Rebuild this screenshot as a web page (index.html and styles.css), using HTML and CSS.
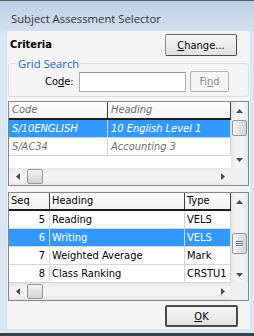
FILE: index.html
```html
<!DOCTYPE html>
<html lang="en">
<head>
    <meta charset="UTF-8">
    <title>Subject Assessment Selector</title>
    <link rel="stylesheet" href="styles.css">
</head>
<body>
<div class="window">
    <div class="titlebar">Subject Assessment Selector</div>
    <div class="client">
        <div class="criteria-row">
            <span class="criteria">Criteria</span>
            <button class="btn btn-change"><u>C</u>hange...</button>
        </div>

        <fieldset class="group">
            <legend>Grid Search</legend>
            <div class="search-row">
                <label for="codeInput">Co<u>d</u>e:</label>
                <input type="text" id="codeInput">
                <button class="btn btn-find" disabled>Fi<u>n</u>d</button>
            </div>
        </fieldset>

        <div class="grid grid-upper">
            <div class="cells">
                <div class="row head">
                    <div class="cell">Code</div>
                    <div class="cell">Heading</div>
                </div>
                <div class="row selected">
                    <div class="cell">S/10ENGLISH</div>
                    <div class="cell">10 English Level 1</div>
                </div>
                <div class="row">
                    <div class="cell">S/AC34</div>
                    <div class="cell">Accounting 3</div>
                </div>
            </div>
            <div class="vscroll">
                <div class="arrow"><svg width="7" height="4"><path d="M0 4L3.5 0L7 4Z"/></svg></div>
                <div class="track">
                    <div class="thumb thumb-upper"></div>
                </div>
                <div class="arrow"><svg width="7" height="4"><path d="M0 0L3.5 4L7 0Z"/></svg></div>
            </div>
            <div class="hscroll">
                <div class="arrow"><svg width="4" height="7"><path d="M4 0L0 3.5L4 7Z"/></svg></div>
                <div class="track">
                    <div class="thumb"></div>
                </div>
                <div class="arrow"><svg width="4" height="7"><path d="M0 0L4 3.5L0 7Z"/></svg></div>
            </div>
            <div class="corner"></div>
        </div>

        <div class="grid grid-lower">
            <div class="cells">
                <div class="row head">
                    <div class="cell">Seq</div>
                    <div class="cell">Heading</div>
                    <div class="cell">Type</div>
                </div>
                <div class="row">
                    <div class="cell num">5</div>
                    <div class="cell">Reading</div>
                    <div class="cell">VELS</div>
                </div>
                <div class="row selected">
                    <div class="cell num">6</div>
                    <div class="cell">Writing</div>
                    <div class="cell">VELS</div>
                </div>
                <div class="row">
                    <div class="cell num">7</div>
                    <div class="cell">Weighted Average</div>
                    <div class="cell">Mark</div>
                </div>
                <div class="row">
                    <div class="cell num">8</div>
                    <div class="cell">Class Ranking</div>
                    <div class="cell">CRSTU1</div>
                </div>
            </div>
            <div class="vscroll">
                <div class="arrow"><svg width="7" height="4"><path d="M0 4L3.5 0L7 4Z"/></svg></div>
                <div class="track">
                    <div class="thumb thumb-lower"><span></span><span></span><span></span></div>
                </div>
                <div class="arrow"><svg width="7" height="4"><path d="M0 0L3.5 4L7 0Z"/></svg></div>
            </div>
            <div class="hscroll">
                <div class="arrow"><svg width="4" height="7"><path d="M4 0L0 3.5L4 7Z"/></svg></div>
                <div class="track">
                    <div class="thumb"></div>
                </div>
                <div class="arrow"><svg width="4" height="7"><path d="M0 0L4 3.5L0 7Z"/></svg></div>
            </div>
            <div class="corner"></div>
        </div>

        <div class="footer">
            <button class="btn btn-ok"><u>O</u>K</button>
        </div>
    </div>
    <div class="taskbar"></div>
</div>
</body>
</html>
```

FILE: styles.css
```css
html, body {
    margin: 0;
    overflow: hidden;
}

body {
    font-family: "DejaVu Sans Condensed", "DejaVu Sans", sans-serif;
    font-size: 11px;
    color: #000;
    background: #d8e6f5;
}

.window {
    width: 254px;
    height: 336px;
    display: flex;
    flex-direction: column;
    box-sizing: border-box;
    border-top: 1px solid #4f5a68;
    background: linear-gradient(#bfcfe2, #cddcee 24px, #d8e6f5 34px, #d8e6f5);
}

.titlebar {
    height: 30px;
    padding-left: 11px;
    line-height: 36px;
    font-family: "Open Sans", sans-serif;
    font-size: 11.3px;
    color: #333;
    box-sizing: border-box;
}

.client {
    margin: 0 4px 0 7px;
    height: 298px;
    background: #f4f4f4;
    display: flex;
    flex-direction: column;
}

.taskbar {
    margin-top: auto;
    height: 3px;
    background: #3b4048;
}

/* buttons */
.btn {
    font: inherit;
    color: #000;
    padding: 0;
    background: linear-gradient(#f6f6f6, #ececec 50%, #e0e0e0);
    border: 1px solid #707070;
    border-radius: 2px;
    box-sizing: border-box;
}

.criteria-row {
    display: flex;
    align-items: center;
    justify-content: space-between;
    height: 22px;
    margin: 3px 13px 0 3px;
}

.criteria {
    font-weight: bold;
    margin-top: -2px;
}

.btn-change {
    width: 72px;
    height: 22px;
    border-color: #6a6a6a #4a4a4a #4a4a4a #8a8a8a;
}

/* group box */
.group {
    margin: 0 1px;
    height: 41px;
    padding: 0;
    border: 1px solid #d5dfe5;
    border-radius: 3px;
    box-sizing: border-box;
}

.group legend {
    color: #1a5fd6;
    padding: 0 2px;
    margin-left: 7px;
    font-family: "Open Sans", sans-serif;
    font-size: 11.3px;
    line-height: 15px;
}

.search-row {
    display: flex;
    align-items: center;
    padding-left: 36px;
    margin-top: 0;
}

.search-row label {
    width: 34px;
}

.search-row input {
    width: 107px;
    height: 20px;
    box-sizing: border-box;
    border: 1px solid #abadb3;
    border-top-color: #8c8f96;
    background: #fff;
    margin: 0;
}

.btn-find {
    width: 39px;
    height: 21px;
    margin-left: 4px;
    color: #8d8d8d;
    border-color: #adb2b5;
    background: #f4f4f4;
}

/* grids */
.grid {
    display: grid;
    grid-template-columns: 1fr 17px;
    grid-template-rows: 1fr 17px;
    margin: 4px 1px 0;
    border: 1px solid #828790;
    background: #fff;
}

.grid-upper {
    height: 85px;
    box-sizing: border-box;
}

.grid-lower {
    height: 109px;
    box-sizing: border-box;
    margin-top: 6px;
}

.cells {
    overflow: hidden;
}

.row {
    display: grid;
    height: 18px;
    box-sizing: border-box;
    border-bottom: 1px solid #d4d4d4;
}

.grid-upper .row {
    grid-template-columns: 99px 1fr;
}

.grid-lower .row {
    grid-template-columns: 41px 135px 1fr;
}

.cell {
    border-right: 1px solid #d4d4d4;
    padding: 0 2px;
    line-height: 17px;
    white-space: nowrap;
    overflow: hidden;
}

.cell.num {
    text-align: right;
    padding-right: 4px;
}

.row.head {
    background: linear-gradient(#fdfdfd, #f2f2f2);
    border-bottom: 2px solid #1c1c1c;
}

.row.head .cell {
    border-right-color: #3c3c3c;
    line-height: 16px;
}

.grid-upper .cell {
    font-style: italic;
    color: #6d6d6d;
    padding-left: 3px;
}

.row.selected {
    background: #3399ff;
}

.grid .row.selected .cell {
    color: #fff;
}

/* scrollbars */
.vscroll, .hscroll {
    display: flex;
    background: linear-gradient(90deg, #e6e6e6, #f3f3f3 30%, #f3f3f3 70%, #e6e6e6);
}

.vscroll {
    flex-direction: column;
}

.hscroll {
    background: linear-gradient(#e6e6e6, #f3f3f3 30%, #f3f3f3 70%, #e6e6e6);
}

.arrow {
    width: 17px;
    height: 17px;
    flex: none;
    display: flex;
    align-items: center;
    justify-content: center;
}

.arrow svg {
    fill: #4a4a4a;
}

.track {
    flex: 1;
    position: relative;
}

.thumb {
    position: absolute;
    box-sizing: border-box;
    border: 1px solid #959595;
    border-radius: 2px;
    background: linear-gradient(90deg, #f5f5f5, #e2e2e2 50%, #d4d4d4);
}

.vscroll .thumb {
    left: 1px;
    right: 1px;
}

.thumb-upper {
    top: 1px;
    height: 16px;
}

.thumb-lower {
    top: 23px;
    height: 21px;
    display: flex;
    flex-direction: column;
    align-items: center;
    justify-content: center;
    gap: 1px;
}

.thumb-lower span {
    width: 7px;
    height: 1px;
    background: #6a6a6a;
    box-shadow: 0 1px 0 #fff;
}

.hscroll .thumb {
    top: 1px;
    bottom: 1px;
    left: 1px;
    width: 16px;
    background: linear-gradient(#f5f5f5, #e2e2e2 50%, #d4d4d4);
}

.corner {
    background: #f0f0f0;
}

/* footer */
.footer {
    display: flex;
    justify-content: flex-end;
    margin: 4px 12px 0 0;
}

.btn-ok {
    width: 73px;
    height: 22px;
    border: 2px solid #4a4a4a;
    border-radius: 2px;
}
```
